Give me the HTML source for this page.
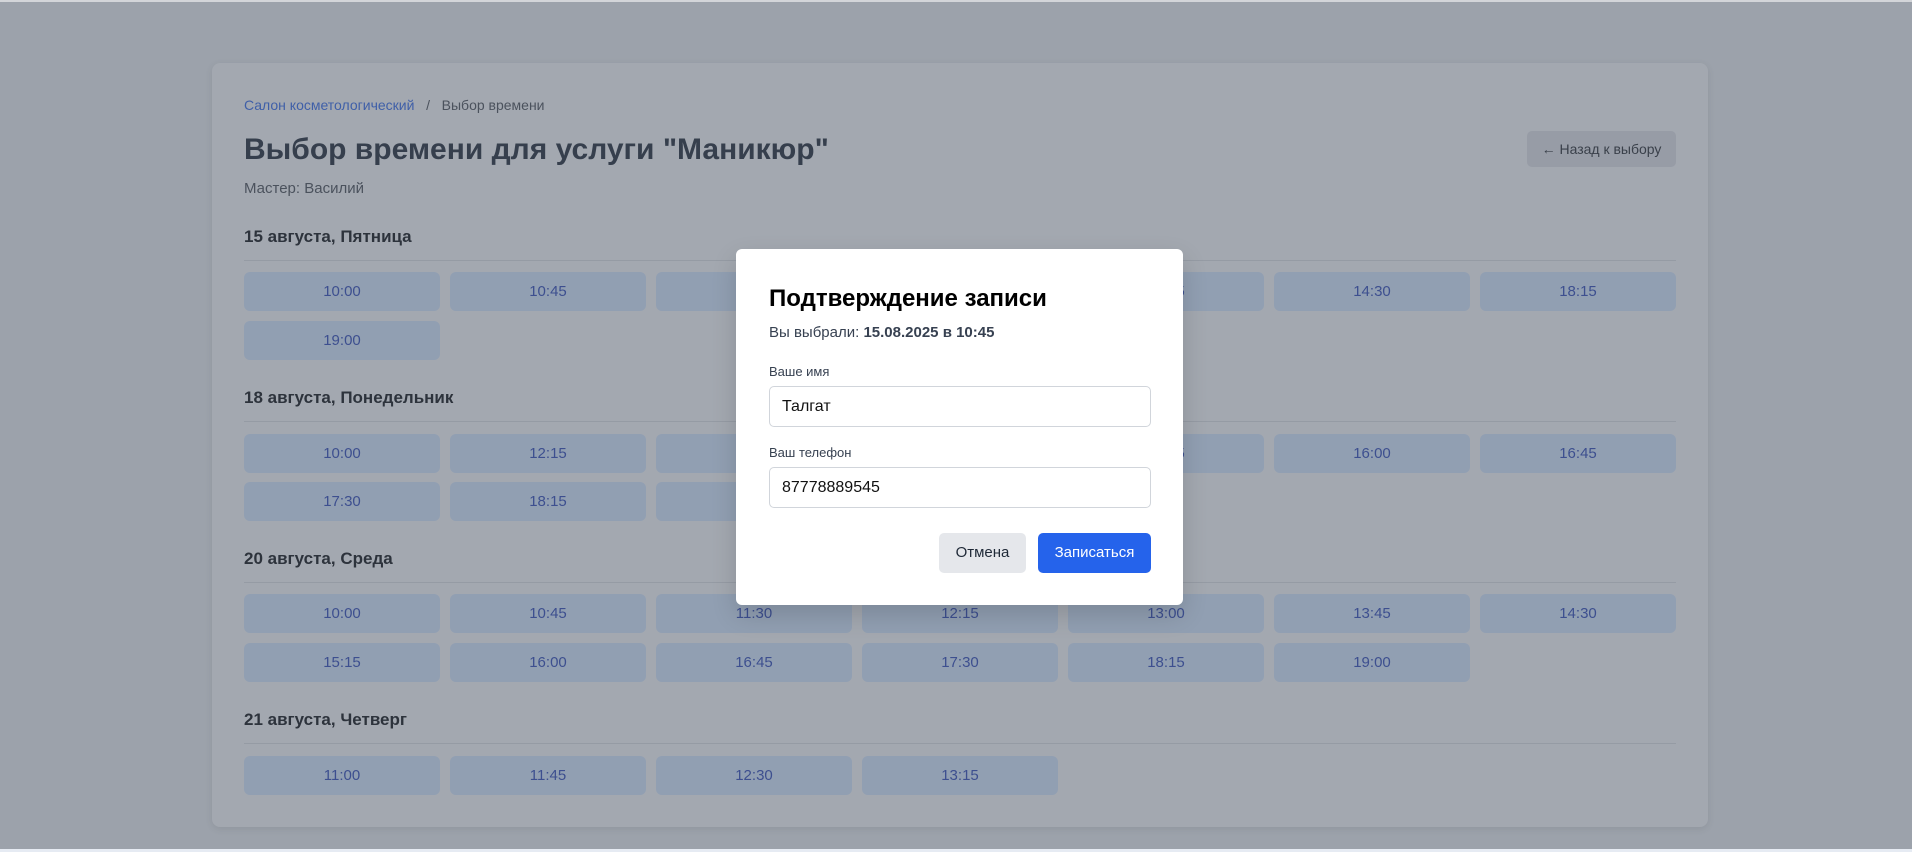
<!DOCTYPE html>
<html><head><meta charset="utf-8"><style>
*{box-sizing:border-box;margin:0;padding:0}
body{width:1912px;height:852px;background:#9ca2ab;font-family:"Liberation Sans","DejaVu Sans",sans-serif;position:relative;overflow:hidden}
.top{position:absolute;left:0;top:0;width:1912px;height:2px;background:#d3d5d9}
.bot{position:absolute;left:0;top:849px;width:1912px;height:3px;background:#e6ebf3}
.card{position:absolute;left:212px;top:63px;width:1496px;height:764px;background:#a3a8b0;border-radius:8px;box-shadow:0 2px 8px rgba(0,0,0,.08)}
.a{position:absolute;white-space:nowrap}
.bc{left:244px;top:97px;font-size:14px;color:#4b525d}
.bc span{color:#3f5fa8}
.h1{left:244px;top:133px;font-size:30px;font-weight:bold;color:#363f4d}
.m{left:244px;top:180px;font-size:15px;color:#4b525d}
.back{left:1527px;top:131px;width:149px;height:36px;background:#979ca6;border-radius:5px;color:#3a404a;font-size:14px;text-align:center;line-height:36px}
.dh{left:244px;font-size:17px;font-weight:bold;color:#2d333c}
.ln{left:244px;width:1432px;height:1px;background:#959ba4}
.t{position:absolute;width:196px;height:39px;background:#919fb2;border-radius:6px;color:#3d4f8f;font-size:15px;text-align:center;line-height:39px}
.modal{position:absolute;left:736px;top:249px;width:447px;height:356px;background:#fff;border-radius:6px;box-shadow:0 10px 25px rgba(0,0,0,.15)}
.modal .a{position:absolute}
.inp{position:absolute;left:33px;width:382px;height:41px;border:1px solid #d1d5db;border-radius:5px;font-size:16px;line-height:39px;padding-left:12px;color:#111}
.btn{position:absolute;top:284px;height:40px;border-radius:5px;font-size:15px;text-align:center;line-height:40px}
</style></head><body>
<div class="top"></div>
<div class="card"></div>
<div class="a bc"><span>Салон косметологический</span>&nbsp;&nbsp; / &nbsp;&nbsp;Выбор времени</div>
<div class="a h1">Выбор времени для услуги "Маникюр"</div>
<div class="a m">Мастер: Василий</div>
<div class="a back">← Назад к выбору</div>

<div class="a dh" style="top:227px">15 августа, Пятница</div>
<div class="a ln" style="top:260px"></div>
<div class="a dh" style="top:388px">18 августа, Понедельник</div>
<div class="a ln" style="top:421px"></div>
<div class="a dh" style="top:549px">20 августа, Среда</div>
<div class="a ln" style="top:582px"></div>
<div class="a dh" style="top:710px">21 августа, Четверг</div>
<div class="a ln" style="top:743px"></div>

<div class="t" style="left:244px;top:272px">10:00</div>
<div class="t" style="left:450px;top:272px">10:45</div>
<div class="t" style="left:656px;top:272px">11:30</div>
<div class="t" style="left:862px;top:272px">12:15</div>
<div class="t" style="left:1068px;top:272px">13:45</div>
<div class="t" style="left:1274px;top:272px">14:30</div>
<div class="t" style="left:1480px;top:272px">18:15</div>
<div class="t" style="left:244px;top:321px">19:00</div>

<div class="t" style="left:244px;top:434px">10:00</div>
<div class="t" style="left:450px;top:434px">12:15</div>
<div class="t" style="left:656px;top:434px">13:00</div>
<div class="t" style="left:862px;top:434px">13:45</div>
<div class="t" style="left:1068px;top:434px">15:15</div>
<div class="t" style="left:1274px;top:434px">16:00</div>
<div class="t" style="left:1480px;top:434px">16:45</div>
<div class="t" style="left:244px;top:482px">17:30</div>
<div class="t" style="left:450px;top:482px">18:15</div>
<div class="t" style="left:656px;top:482px">19:00</div>

<div class="t" style="left:244px;top:594px">10:00</div>
<div class="t" style="left:450px;top:594px">10:45</div>
<div class="t" style="left:656px;top:594px">11:30</div>
<div class="t" style="left:862px;top:594px">12:15</div>
<div class="t" style="left:1068px;top:594px">13:00</div>
<div class="t" style="left:1274px;top:594px">13:45</div>
<div class="t" style="left:1480px;top:594px">14:30</div>
<div class="t" style="left:244px;top:643px">15:15</div>
<div class="t" style="left:450px;top:643px">16:00</div>
<div class="t" style="left:656px;top:643px">16:45</div>
<div class="t" style="left:862px;top:643px">17:30</div>
<div class="t" style="left:1068px;top:643px">18:15</div>
<div class="t" style="left:1274px;top:643px">19:00</div>

<div class="t" style="left:244px;top:756px">11:00</div>
<div class="t" style="left:450px;top:756px">11:45</div>
<div class="t" style="left:656px;top:756px">12:30</div>
<div class="t" style="left:862px;top:756px">13:15</div>

<div class="modal">
<div class="a" style="left:33px;top:36px;font-size:24px;font-weight:bold;color:#000">Подтверждение записи</div>
<div class="a" style="left:33px;top:75px;font-size:15px;color:#374151">Вы выбрали: <b>15.08.2025 в 10:45</b></div>
<div class="a" style="left:33px;top:115px;font-size:13px;color:#374151">Ваше имя</div>
<div class="inp" style="top:137px">Талгат</div>
<div class="a" style="left:33px;top:196px;font-size:13px;color:#374151">Ваш телефон</div>
<div class="inp" style="top:218px">87778889545</div>
<div class="btn" style="left:203px;width:87px;background:#e5e7eb;color:#1f2937">Отмена</div>
<div class="btn" style="left:302px;width:113px;background:#2563eb;color:#fff">Записаться</div>
</div>
<div class="bot"></div>
</body></html>
